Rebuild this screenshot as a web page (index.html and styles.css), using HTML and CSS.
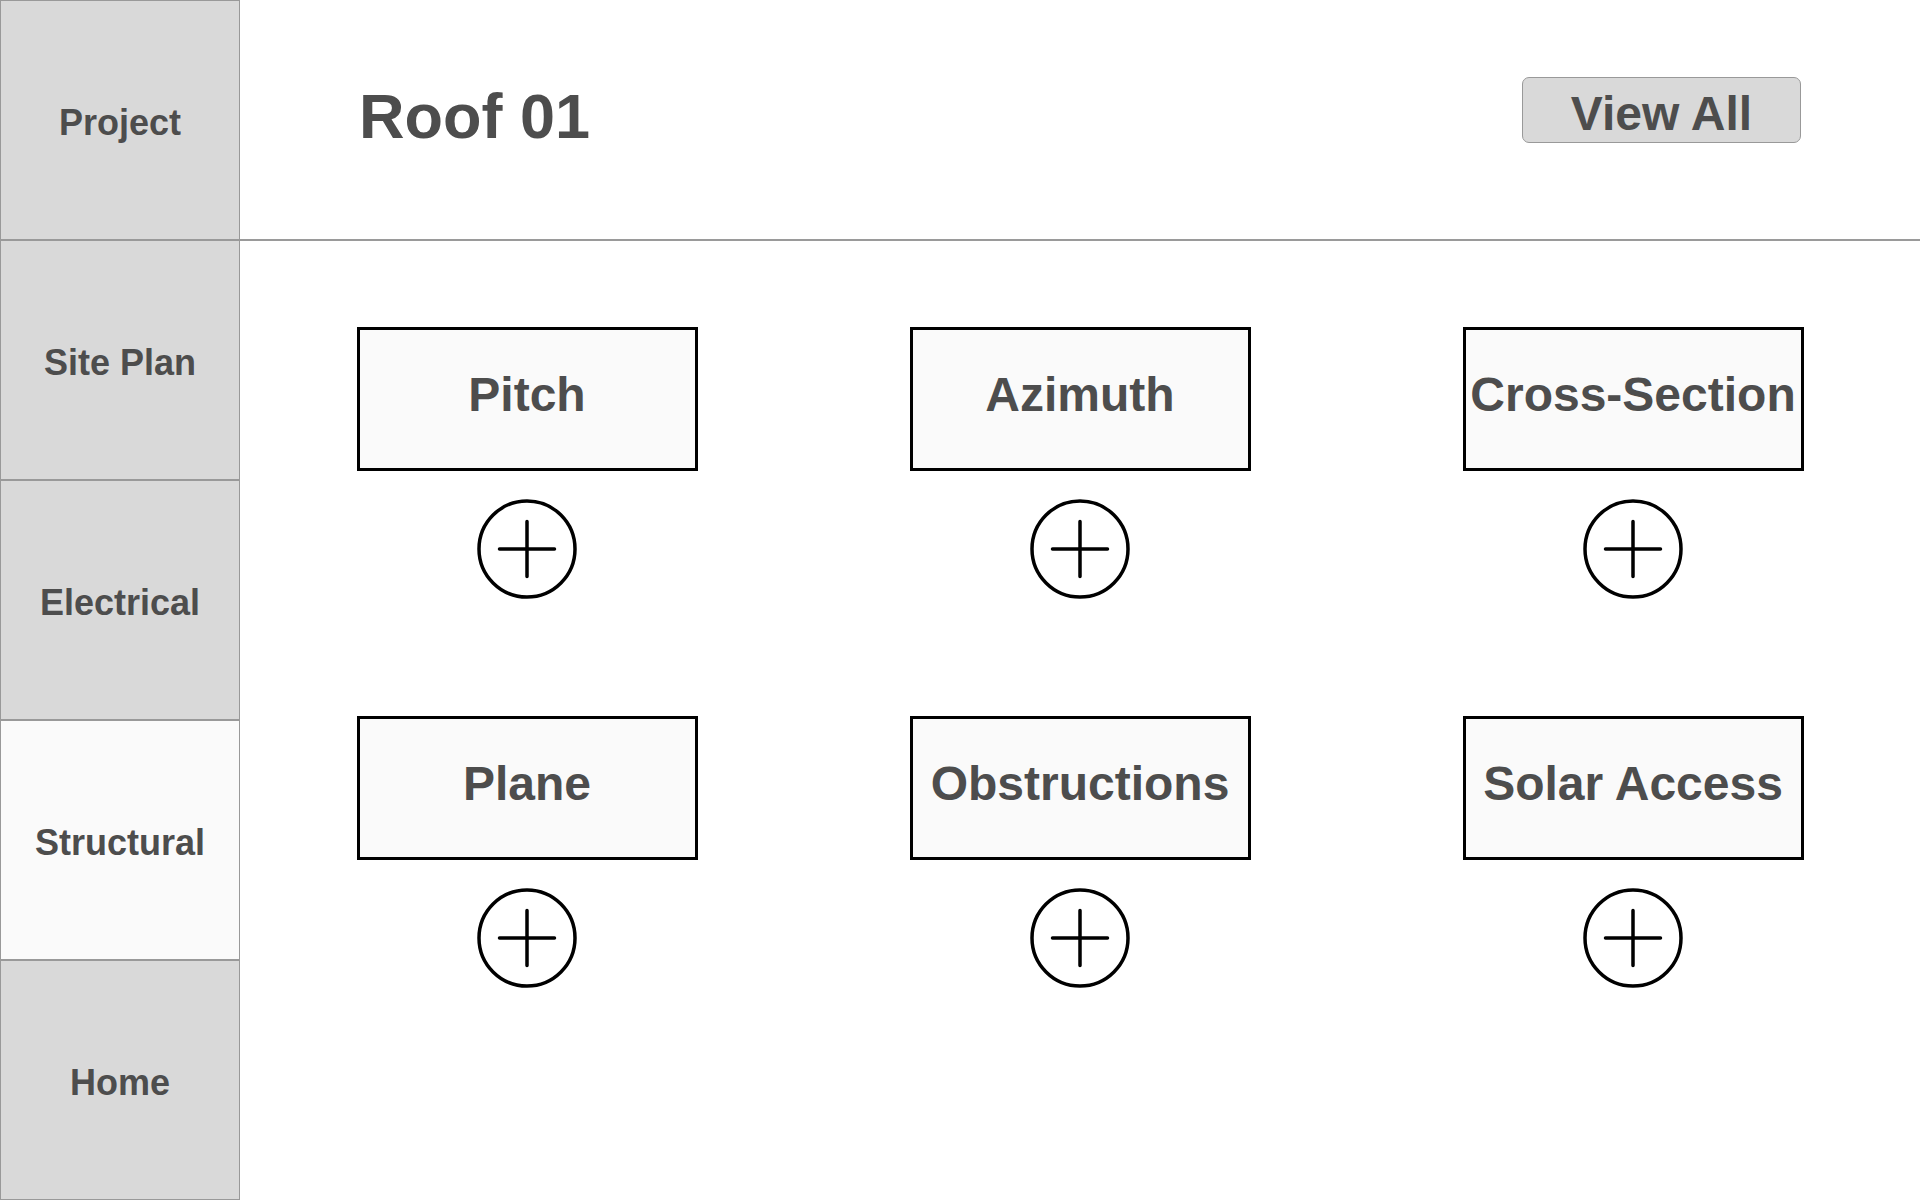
FILE: index.html
```html
<!DOCTYPE html>
<html lang="en">
<head>
<meta charset="utf-8">
<title>Roof 01</title>
<link rel="stylesheet" href="styles.css">
</head>
<body>
<div class="app">
  <nav class="sidebar">
    <div class="nav-item">Project</div>
    <div class="nav-item">Site Plan</div>
    <div class="nav-item">Electrical</div>
    <div class="nav-item active">Structural</div>
    <div class="nav-item">Home</div>
  </nav>
  <main class="main">
    <header class="header">
      <h1 class="title">Roof 01</h1>
      <button class="view-all">View All</button>
    </header>
    <section class="tiles">
      <div class="tile">
        <div class="tile-label">Pitch</div>
        <button class="add-btn" aria-label="Add Pitch"><svg viewBox="0 0 100 100" width="100" height="100"><circle cx="50" cy="50" r="48" /><path d="M22.5 50H77.5M50 22.5V77.5" /></svg></button>
      </div>
      <div class="tile">
        <div class="tile-label">Azimuth</div>
        <button class="add-btn" aria-label="Add Azimuth"><svg viewBox="0 0 100 100" width="100" height="100"><circle cx="50" cy="50" r="48" /><path d="M22.5 50H77.5M50 22.5V77.5" /></svg></button>
      </div>
      <div class="tile">
        <div class="tile-label">Cross-Section</div>
        <button class="add-btn" aria-label="Add Cross-Section"><svg viewBox="0 0 100 100" width="100" height="100"><circle cx="50" cy="50" r="48" /><path d="M22.5 50H77.5M50 22.5V77.5" /></svg></button>
      </div>
      <div class="tile">
        <div class="tile-label">Plane</div>
        <button class="add-btn" aria-label="Add Plane"><svg viewBox="0 0 100 100" width="100" height="100"><circle cx="50" cy="50" r="48" /><path d="M22.5 50H77.5M50 22.5V77.5" /></svg></button>
      </div>
      <div class="tile">
        <div class="tile-label">Obstructions</div>
        <button class="add-btn" aria-label="Add Obstructions"><svg viewBox="0 0 100 100" width="100" height="100"><circle cx="50" cy="50" r="48" /><path d="M22.5 50H77.5M50 22.5V77.5" /></svg></button>
      </div>
      <div class="tile">
        <div class="tile-label">Solar Access</div>
        <button class="add-btn" aria-label="Add Solar Access"><svg viewBox="0 0 100 100" width="100" height="100"><circle cx="50" cy="50" r="48" /><path d="M22.5 50H77.5M50 22.5V77.5" /></svg></button>
      </div>
    </section>
  </main>
</div>
</body>
</html>
```
FILE: styles.css
```css
html, body {
  margin: 0;
  padding: 0;
  background: #ffffff;
}

body {
  font-family: "Liberation Sans", Arial, Helvetica, sans-serif;
  font-weight: bold;
  color: #4d4d4d;
}

.app {
  display: flex;
  width: 1920px;
  height: 1200px;
  overflow: hidden;
}

.sidebar {
  width: 240px;
  flex-shrink: 0;
  display: flex;
  flex-direction: column;
}

.nav-item {
  height: 240px;
  box-sizing: border-box;
  border: 1px solid #999999;
  background: #d9d9d9;
  display: flex;
  align-items: center;
  justify-content: center;
  padding-top: 5px;
  font-size: 36px;
  color: #4d4d4d;
}

.nav-item.active {
  background: #fafafa;
}

.main {
  flex: 1;
  display: flex;
  flex-direction: column;
}

.header {
  height: 241px;
  box-sizing: border-box;
  border-bottom: 2px solid #9a9a9a;
  display: flex;
  justify-content: space-between;
  align-items: flex-start;
  padding: 0 119px;
}

.title {
  margin: 80px 0 0;
  font-size: 63px;
  line-height: 72px;
  font-weight: bold;
  color: #4d4d4d;
}

.view-all {
  margin-top: 77px;
  width: 279px;
  height: 66px;
  box-sizing: border-box;
  padding: 7px 0 0;
  background: #d9d9d9;
  border: 1px solid #999999;
  border-radius: 7px;
  font-family: inherit;
  font-weight: bold;
  font-size: 48px;
  color: #4d4d4d;
  display: flex;
  align-items: center;
  justify-content: center;
}

.tiles {
  display: grid;
  grid-template-columns: repeat(3, 341px);
  column-gap: 212px;
  row-gap: 117px;
  justify-content: center;
  padding-top: 86px;
}

.tile {
  display: flex;
  flex-direction: column;
  align-items: center;
}

.tile-label {
  width: 341px;
  height: 144px;
  box-sizing: border-box;
  border: 3px solid #000000;
  background: #fafafa;
  display: flex;
  align-items: center;
  justify-content: center;
  padding-bottom: 9px;
  font-size: 48px;
  color: #4d4d4d;
  white-space: nowrap;
}

.add-btn {
  margin-top: 28px;
  padding: 0;
  border: none;
  background: none;
  width: 100px;
  height: 100px;
  display: block;
}

.add-btn svg {
  display: block;
  fill: none;
  stroke: #000000;
  stroke-width: 3.5;
  stroke-linecap: round;
}
```
